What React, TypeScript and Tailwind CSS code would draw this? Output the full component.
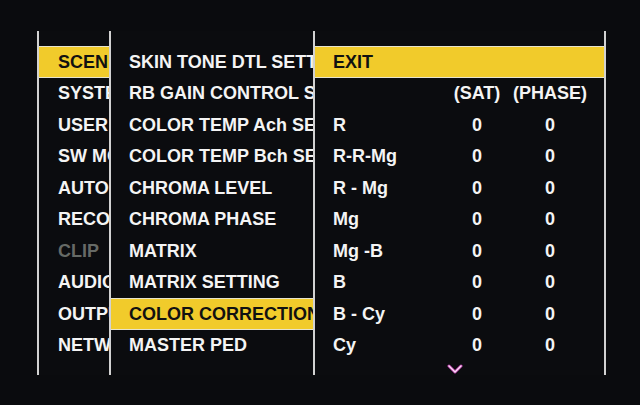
import React from "react";

const font = { fontFamily: '"Liberation Sans", Arial, sans-serif' };

const menu1 = ["SCENE FILE", "SYSTEM MODE", "USER SW", "SW MODE", "AUTO SW", "RECORDING", "CLIP", "AUDIO", "OUTPUT SEL", "NETWORK"];
const menu2 = [
  "SKIN TONE DTL SETTING",
  "RB GAIN CONTROL SETTING",
  "COLOR TEMP Ach SETTING",
  "COLOR TEMP Bch SETTING",
  "CHROMA LEVEL",
  "CHROMA PHASE",
  "MATRIX",
  "MATRIX SETTING",
  "COLOR CORRECTION",
  "MASTER PED",
];
const rows3 = ["R", "R-R-Mg", "R - Mg", "Mg", "Mg -B", "B", "B - Cy", "Cy"];

function Row({ label, active, disabled, pl }: { label: string; active?: boolean; disabled?: boolean; pl: string }) {
  if (active) {
    return (
      <div className={`h-[31.5px] flex items-center whitespace-nowrap bg-[#f1cb2b] border-y border-[#e8e4cc] text-[#111111] ${pl}`}>
        {label}
      </div>
    );
  }
  return (
    <div className={`h-[31.5px] flex items-center whitespace-nowrap ${disabled ? "text-[#666a66]" : "text-[#f4f4f4]"} ${pl}`}>
      {label}
    </div>
  );
}

export default function App() {
  return (
    <div
      className="w-[640px] h-[405px] bg-[#0a0b0e] pt-[31px] pl-[37px] flex font-bold text-[18px] leading-none overflow-hidden"
      style={font}
    >
      <div className="w-[72px] h-[344px] border-l-2 border-[#d2d2d2] overflow-hidden pt-[15px] bg-[#0b0c0f]">
        {menu1.map((m, i) => (
          <Row key={m} label={m} active={i === 0} disabled={m === "CLIP"} pl="pl-[19px]" />
        ))}
      </div>
      <div className="w-[204px] h-[344px] border-l-2 border-[#d2d2d2] overflow-hidden pt-[15px] bg-[#0b0c0f]">
        {menu2.map((m, i) => (
          <Row key={m} label={m} active={i === 8} pl="pl-[18px]" />
        ))}
      </div>
      <div className="w-[293px] h-[344px] border-x-2 border-[#d2d2d2] overflow-hidden pt-[15px] bg-[#0b0c0f]">
        <Row label="EXIT" active pl="pl-[18px]" />
        <div className="h-[31.5px] flex items-center pl-[18px] text-[#f4f4f4] whitespace-nowrap">
          <div className="w-[110px]" />
          <div className="w-[68px] text-center">(SAT)</div>
          <div className="w-[78px] text-center">(PHASE)</div>
        </div>
        {rows3.map((r) => (
          <div key={r} className="h-[31.5px] flex items-center pl-[18px] text-[#f4f4f4] whitespace-nowrap">
            <div className="w-[110px]">{r}</div>
            <div className="w-[68px] text-center">0</div>
            <div className="w-[78px] text-center">0</div>
          </div>
        ))}
        <div className="pl-[132px] pt-[3px]">
          <svg width="16" height="10" viewBox="0 0 16 10">
            <path d="M2 2 L8 8 L14 2" fill="none" stroke="#c040b0" strokeWidth="3" strokeLinecap="round" strokeLinejoin="round" />
            <path d="M2 2 L8 8 L14 2" fill="none" stroke="#f8e0f4" strokeWidth="1.4" strokeLinecap="round" strokeLinejoin="round" />
          </svg>
        </div>
      </div>
    </div>
  );
}
